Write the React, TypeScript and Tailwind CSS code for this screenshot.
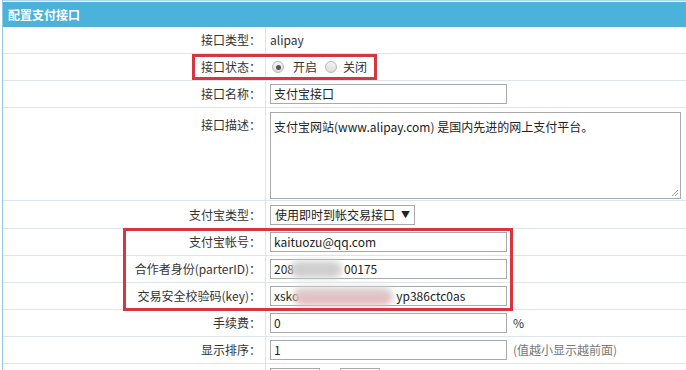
import React from "react";

const font = { fontFamily: '"Noto Sans CJK SC", "Noto Sans", sans-serif' };

function Row({ label, h = "h-[27px]", children }: { label: string; h?: string; children?: React.ReactNode }) {
  return (
    <div className={`flex ${h} border-b border-[#dde5ea]`}>
      <div className="w-[263px] shrink-0 border-r border-[#dde5ea] flex items-center justify-end pr-[4px] text-[12px] text-[#333]">
        {label}
      </div>
      <div className="flex-1 flex items-center pl-[4px] text-[12px] text-[#333]">{children}</div>
    </div>
  );
}

function TextInput({ children, w = "w-[237px]" }: { children?: React.ReactNode; w?: string }) {
  return (
    <div className={`${w} h-[20px] border border-[#a9a9a9] bg-white flex items-center px-[3px] text-[12px] text-[#222] leading-none`}>
      {children}
    </div>
  );
}

function Radio({ checked }: { checked?: boolean }) {
  return (
    <span className="w-[12px] h-[12px] rounded-full border border-[#b8b8b8] bg-gradient-to-b from-[#f4f4f4] to-[#dcdcdc] flex items-center justify-center">
      {checked && <span className="w-[5px] h-[5px] rounded-full bg-[#555]" />}
    </span>
  );
}

export default function App() {
  return (
    <div className="relative w-[686px] h-[370px] overflow-hidden bg-white" style={font}>
      <div className="ml-[2px] border-l border-[#8fcbe3] border-t border-t-[#a8d9ec] pt-[1px]">
        <div className="h-[25px] bg-[#4cb2dc] flex items-center pl-[5px] text-[12px] font-bold text-white">
          配置支付接口
        </div>
        <Row label="接口类型：">alipay</Row>
        <Row label="接口状态：">
          <div className="flex items-center pl-[2px]">
            <Radio checked />
            <span className="ml-[9px]">开启</span>
            <span className="ml-[8px]"><Radio /></span>
            <span className="ml-[6px]">关闭</span>
          </div>
        </Row>
        <Row label="接口名称：">
          <TextInput>支付宝接口</TextInput>
        </Row>
        <div className="flex h-[93px] border-b border-[#dde5ea]">
          <div className="w-[263px] shrink-0 border-r border-[#dde5ea] flex justify-end pt-[8px] pr-[4px] text-[12px] text-[#333]">
            接口描述：
          </div>
          <div className="flex-1 pl-[4px] pt-[4px]">
            <div className="relative w-[411px] h-[87px] border border-[#a9a9a9] px-[3px] pt-[5px] text-[12px] text-[#222]">
              支付宝网站(www.alipay.com) 是国内先进的网上支付平台。
              <svg className="absolute right-[1px] bottom-[1px]" width="8" height="8" viewBox="0 0 8 8">
                <path d="M7 1L1 7M7 4L4 7" stroke="#999" strokeWidth="1" />
              </svg>
            </div>
          </div>
        </div>
        <Row label="支付宝类型：" h="h-[28px]">
          <div className="w-[145px] h-[20px] border border-[#a9a9a9] flex items-center justify-between px-[4px] text-[12px] text-[#222]">
            <span>使用即时到帐交易接口</span>
            <span className="text-[9px]">▼</span>
          </div>
        </Row>
        <Row label="支付宝帐号：">
          <TextInput>kaituozu@qq.com</TextInput>
        </Row>
        <Row label="合作者身份(parterID)：">
          <TextInput>
            <span>208</span>
            <span className="w-[50px]" />
            <span>00175</span>
          </TextInput>
        </Row>
        <Row label="交易安全校验码(key)：">
          <TextInput>
            <span>xsko</span>
            <span className="w-[97px]" />
            <span>yp386ctc0as</span>
          </TextInput>
        </Row>
        <Row label="手续费：">
          <TextInput>0</TextInput>
          <span className="ml-[6px]">%</span>
        </Row>
        <Row label="显示排序：">
          <TextInput>1</TextInput>
          <span className="ml-[6px] text-[#777]">(值越小显示越前面)</span>
        </Row>
        <div className="flex h-[27px]">
          <div className="w-[263px] shrink-0 border-r border-[#dde5ea]" />
          <div className="flex-1 flex items-start pl-[4px] pt-[4px]">
            <div className="w-[50px] h-[20px] border border-[#a9a9a9]" />
            <div className="w-[40px] h-[20px] border border-[#a9a9a9] ml-[20px]" />
          </div>
        </div>
      </div>

      {/* masked secrets */}
      <div className="absolute left-[290px] top-[261px] w-[52px] h-[17px] rounded-full bg-[#cfcfcf] blur-[3px]" />
      <div className="absolute left-[293px] top-[287px] w-[100px] h-[18px] rounded-full bg-gradient-to-b from-[#d8d8d8] to-[#e8b0b5] blur-[3px]" />

      {/* red highlight boxes */}
      <div className="absolute left-[192px] top-[54px] w-[185px] h-[26px] border-[3px] border-[#d7363f]" />
      <div className="absolute left-[123px] top-[228px] w-[390px] h-[83px] border-[3px] border-[#d7363f]" />
    </div>
  );
}
